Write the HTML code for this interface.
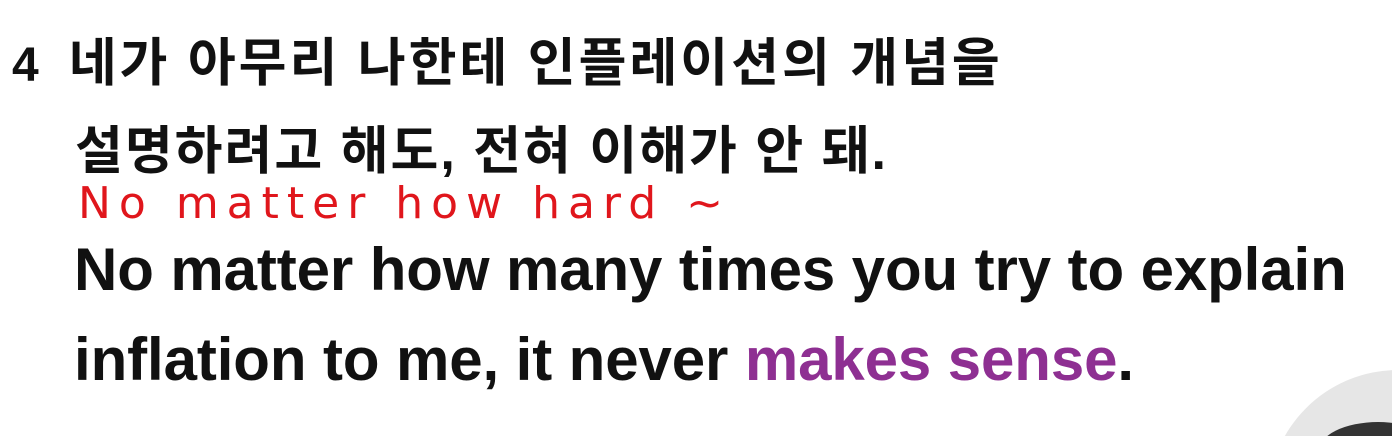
<!DOCTYPE html>
<html><head><meta charset="utf-8"><style>
html,body{margin:0;padding:0;width:1392px;height:436px;overflow:hidden;background:#fff}
#w{position:relative;width:1392px;height:436px;overflow:hidden}
.l{position:absolute;white-space:nowrap;line-height:1}
.ko{font-family:"Liberation Sans","Noto Sans CJK KR",sans-serif;font-weight:bold;font-size:52px;color:#111;letter-spacing:3px}
.en{font-family:"Liberation Sans",sans-serif;font-weight:bold;font-size:60px;color:#111;letter-spacing:-0.1px}
.red{font-family:"DejaVu Sans","Liberation Sans",sans-serif;font-size:44px;color:#e0161c;letter-spacing:8px}
.p{color:#8e2f92}
</style></head><body><div id="w">
<svg style="position:absolute;left:0;top:0" width="1392" height="436"><circle cx="1398" cy="500" r="130" fill="#e6e6e6"/><ellipse cx="1378" cy="452" rx="60" ry="30" fill="#333"/></svg>
<div class="l ko" style="left:12px;top:38px"><span style="font-size:48px;letter-spacing:0">4</span><span style="display:inline-block;width:30px"></span>네가 아무리 나한테 인플레이션의 개념을</div>
<div class="l ko" style="left:75px;top:126px;letter-spacing:2px">설명하려고 해도, 전혀 이해가 안 돼.</div>
<div class="l red" style="left:78px;top:182px">No matter how hard ~</div>
<div class="l en" style="left:74px;top:240px">No matter how many times you try to explain</div>
<div class="l en" style="left:74px;top:330px">inflation to me, it never <span class="p">makes sense</span>.</div>
</div></body></html>
